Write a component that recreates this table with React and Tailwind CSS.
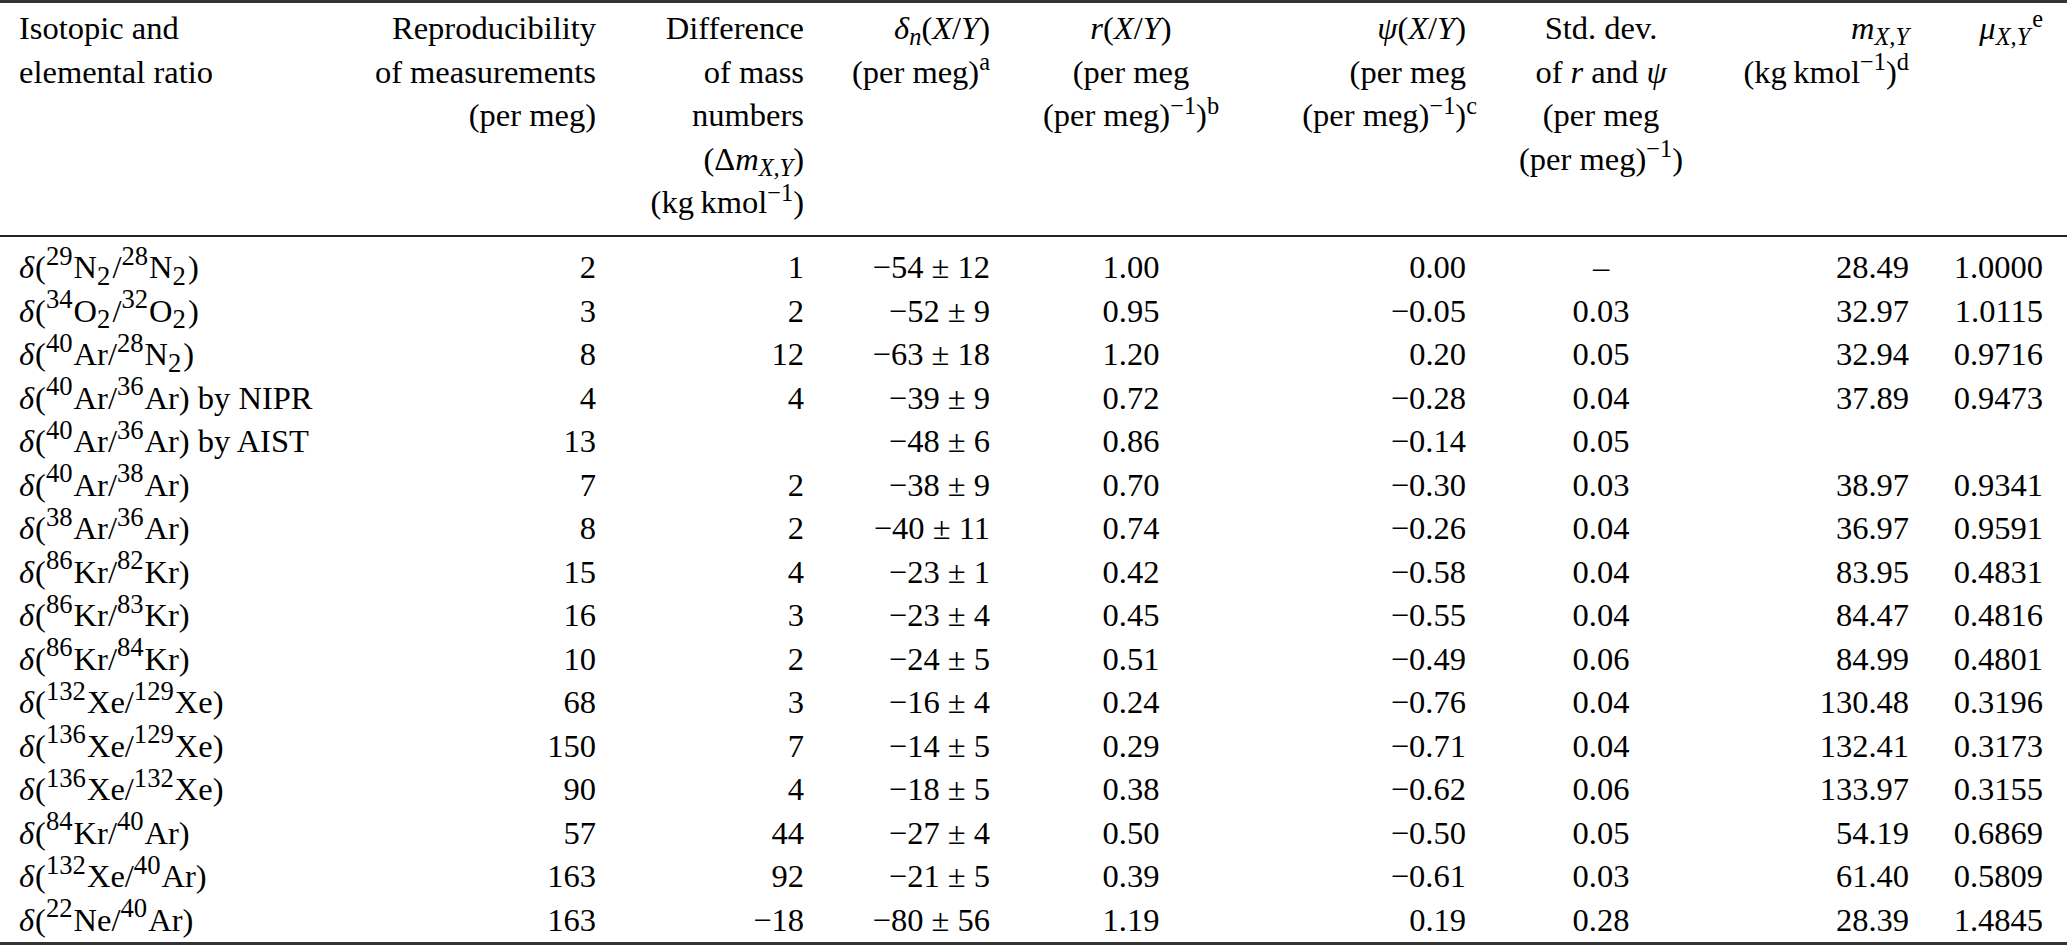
import React from 'react'

const cols = 'grid grid-cols-[336px_260px_208px_186px_282px_194px_270px_173px_134px]'

const Iso = ({ m, el, n }) => (
  <>
    <sup className="text-[82%] mr-[1px]">{m}</sup>
    {el}
    {n && <sub className="text-[82%] mr-[2px]">{n}</sub>}
  </>
)

const Ratio = ({ x, y, tail }) => (
  <>
    <i className="mr-[1px]">δ</i>({x}/{y}){tail}
  </>
)

const XY = () => (
  <sub className="italic">X,Y</sub>
)

const rows = [
  [<Ratio x={<Iso m="29" el="N" n="2" />} y={<Iso m="28" el="N" n="2" />} />, '2', '1', '−54 ± 12', '1.00', '0.00', '–', '28.49', '1.0000'],
  [<Ratio x={<Iso m="34" el="O" n="2" />} y={<Iso m="32" el="O" n="2" />} />, '3', '2', '−52 ± 9', '0.95', '−0.05', '0.03', '32.97', '1.0115'],
  [<Ratio x={<Iso m="40" el="Ar" />} y={<Iso m="28" el="N" n="2" />} />, '8', '12', '−63 ± 18', '1.20', '0.20', '0.05', '32.94', '0.9716'],
  [<Ratio x={<Iso m="40" el="Ar" />} y={<Iso m="36" el="Ar" />} tail=" by NIPR" />, '4', '4', '−39 ± 9', '0.72', '−0.28', '0.04', '37.89', '0.9473'],
  [<Ratio x={<Iso m="40" el="Ar" />} y={<Iso m="36" el="Ar" />} tail=" by AIST" />, '13', '', '−48 ± 6', '0.86', '−0.14', '0.05', '', ''],
  [<Ratio x={<Iso m="40" el="Ar" />} y={<Iso m="38" el="Ar" />} />, '7', '2', '−38 ± 9', '0.70', '−0.30', '0.03', '38.97', '0.9341'],
  [<Ratio x={<Iso m="38" el="Ar" />} y={<Iso m="36" el="Ar" />} />, '8', '2', '−40 ± 11', '0.74', '−0.26', '0.04', '36.97', '0.9591'],
  [<Ratio x={<Iso m="86" el="Kr" />} y={<Iso m="82" el="Kr" />} />, '15', '4', '−23 ± 1', '0.42', '−0.58', '0.04', '83.95', '0.4831'],
  [<Ratio x={<Iso m="86" el="Kr" />} y={<Iso m="83" el="Kr" />} />, '16', '3', '−23 ± 4', '0.45', '−0.55', '0.04', '84.47', '0.4816'],
  [<Ratio x={<Iso m="86" el="Kr" />} y={<Iso m="84" el="Kr" />} />, '10', '2', '−24 ± 5', '0.51', '−0.49', '0.06', '84.99', '0.4801'],
  [<Ratio x={<Iso m="132" el="Xe" />} y={<Iso m="129" el="Xe" />} />, '68', '3', '−16 ± 4', '0.24', '−0.76', '0.04', '130.48', '0.3196'],
  [<Ratio x={<Iso m="136" el="Xe" />} y={<Iso m="129" el="Xe" />} />, '150', '7', '−14 ± 5', '0.29', '−0.71', '0.04', '132.41', '0.3173'],
  [<Ratio x={<Iso m="136" el="Xe" />} y={<Iso m="132" el="Xe" />} />, '90', '4', '−18 ± 5', '0.38', '−0.62', '0.06', '133.97', '0.3155'],
  [<Ratio x={<Iso m="84" el="Kr" />} y={<Iso m="40" el="Ar" />} />, '57', '44', '−27 ± 4', '0.50', '−0.50', '0.05', '54.19', '0.6869'],
  [<Ratio x={<Iso m="132" el="Xe" />} y={<Iso m="40" el="Ar" />} />, '163', '92', '−21 ± 5', '0.39', '−0.61', '0.03', '61.40', '0.5809'],
  [<Ratio x={<Iso m="22" el="Ne" />} y={<Iso m="40" el="Ar" />} />, '163', '−18', '−80 ± 56', '1.19', '0.19', '0.28', '28.39', '1.4845'],
]

// alignment per column: l = left, r = right, c = center
const align = ['l', 'r', 'r', 'r', 'c', 'r', 'c', 'r', 'r']
const cellCls = {
  l: 'flex flex-col items-start pl-[19px]',
  r: 'flex flex-col items-end',
  c: 'flex flex-col items-center',
}

const Line = ({ children }) => (
  <div className="h-[43.5px] leading-[43.5px] whitespace-nowrap">{children}</div>
)

const header = [
  ['Isotopic and', 'elemental ratio'],
  ['Reproducibility', 'of measurements', '(per meg)'],
  ['Difference', 'of mass', 'numbers', <>(Δ<i>m</i><XY />)</>, <>(kg&thinsp;kmol<sup>−1</sup>)</>],
  [<><i>δ</i><sub className="italic">n</sub>(<i>X</i>/<i>Y</i>)</>, <>(per meg)<sup>a</sup></>],
  [<><i>r</i>(<i>X</i>/<i>Y</i>)</>, '(per meg', <>(per meg)<sup>−1</sup>)<sup>b</sup></>],
  [
    <><i>ψ</i>(<i>X</i>/<i>Y</i>)</>,
    '(per meg',
    <>(per meg)<sup>−1</sup>)<sup className="mr-[-11px]">c</sup></>,
  ],
  ['Std. dev.', <>of <i>r</i> and <i>ψ</i></>, '(per meg', <>(per meg)<sup>−1</sup>)</>],
  [<><i>m</i><XY /></>, <>(kg&thinsp;kmol<sup>−1</sup>)<sup>d</sup></>],
  [<><i>μ</i><XY /><sup className="ml-[2px]">e</sup></>],
]

export default function App() {
  return (
    <div className="w-[2067px] h-[946px] bg-white text-black text-[32.5px] font-['Liberation_Serif','Times_New_Roman',serif]">
      <div className="border-t-[3px] border-b-[3px] border-[#333]">
        <div className={`${cols} pt-[4px] pb-[10px] border-b-2 border-[#222]`}>
          {header.map((lines, ci) => (
            <div key={ci} className={cellCls[align[ci]]}>
              {lines.map((l, li) => (
                <Line key={li}>{l}</Line>
              ))}
            </div>
          ))}
        </div>
        <div className="pt-[9.5px]">
          {rows.map((row, ri) => (
            <div key={ri} className={cols}>
              {row.map((v, ci) => (
                <div key={ci} className={cellCls[align[ci]]}>
                  <Line>{v}</Line>
                </div>
              ))}
            </div>
          ))}
        </div>
      </div>
    </div>
  )
}
